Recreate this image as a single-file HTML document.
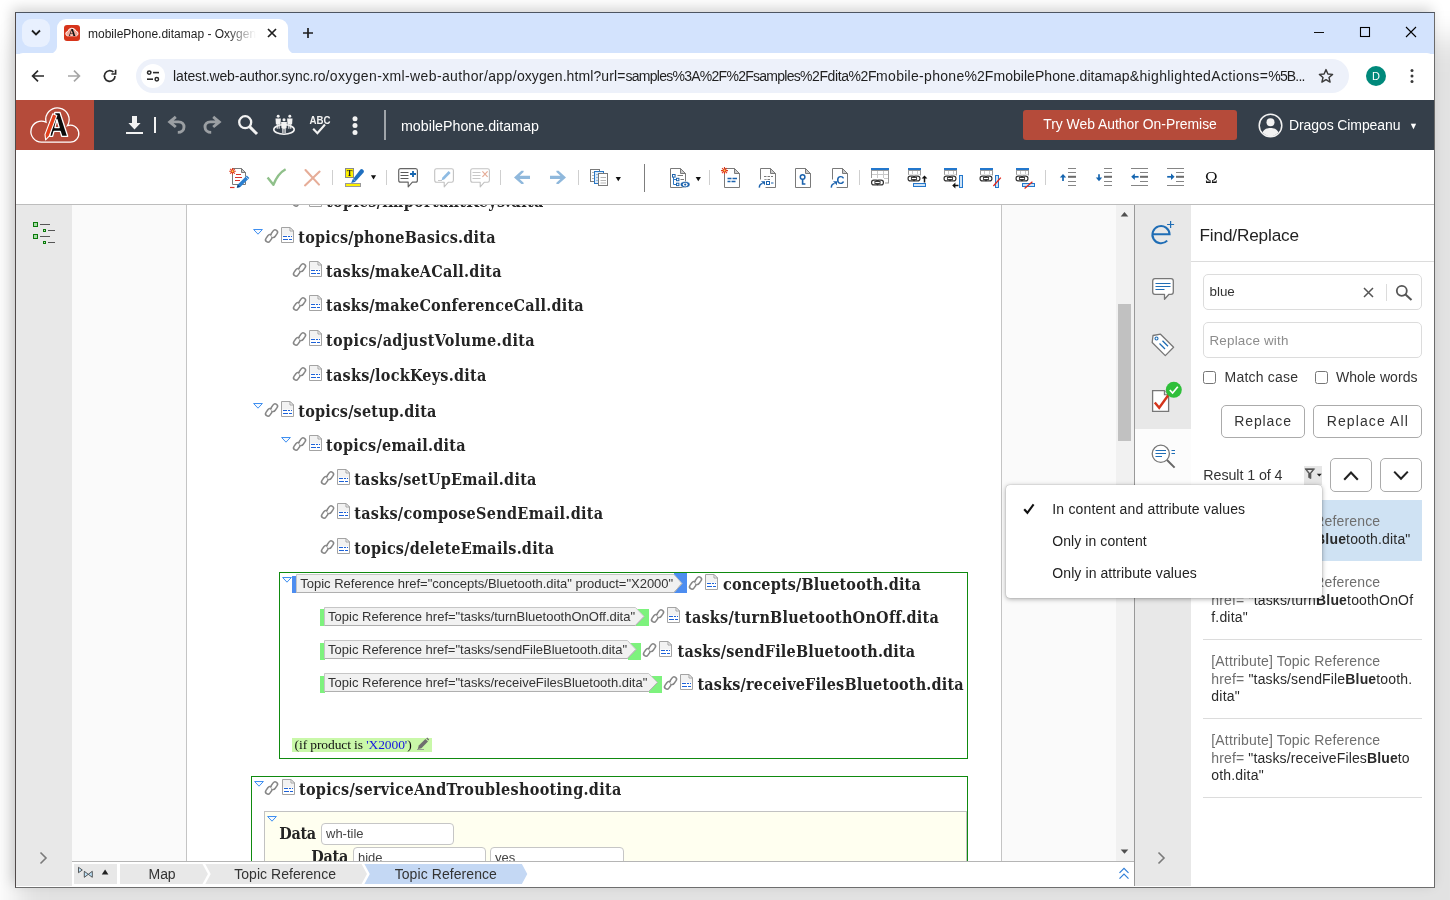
<!DOCTYPE html>
<html lang="en">
<head>
<meta charset="utf-8">
<title>mobilePhone.ditamap - Oxygen XML Web Author</title>
<style>
*{box-sizing:border-box;margin:0;padding:0}
html,body{width:1450px;height:900px;overflow:hidden;background:#fff}
body{position:relative;font-family:"Liberation Sans",sans-serif;color:#222}
.abs{position:absolute}
#shadow{position:absolute;left:15px;top:12px;width:1420px;height:876px;box-shadow:-3px -4px 12px rgba(0,0,0,.17),24px 50px 28px 24px rgba(0,0,0,.115);background:#fff}
#win{position:absolute;left:15px;top:12px;width:1420px;height:876px;border:1px solid #5a5a5a;border-color:#4d5561 #6a6a6a #6e6e6e #514a4a;background:#fff;overflow:hidden}
/* all children of #win are positioned in page coordinates via #pc */
#pc{position:absolute;left:-16px;top:-13px;width:1450px;height:900px;will-change:transform}
#tabstrip{left:16px;top:13px;width:1418px;height:41px;background:#d3e3fd}
#chtool{left:16px;top:53px;width:1418px;height:47px;background:#fff;border-radius:7px 7px 0 0}
#omni{left:136px;top:59px;width:1213px;height:34px;border-radius:17px;background:#edf1fa}
#apphead{left:16px;top:100px;width:1418px;height:50px;background:#353f4a}
#logo{left:16px;top:100px;width:78px;height:50px;background:#b54b3a}
#tbar{left:16px;top:150px;width:1418px;height:54px;background:#fff}
#tbarline{left:16px;top:204px;width:1418px;height:1px;background:#bdbdbd}
#lstrip{left:16px;top:205px;width:56px;height:681px;background:#e8e8e8}
#edbg{left:72px;top:205px;width:1044px;height:656px;background:#fafafa}
#page{left:186px;top:205px;width:816px;height:656px;background:#fff;border-left:1px solid #c4c4c4;border-right:1px solid #c4c4c4}
#sbar{left:1116px;top:205px;width:18px;height:656px;background:#f1f1f1}
#sthumb{left:1118px;top:304px;width:13px;height:137px;background:#c1c1c1}
#vline{left:1134px;top:205px;width:1px;height:681px;background:#999}
#rstrip{left:1135px;top:205px;width:56px;height:681px;background:#e8e8e8}
#panel{left:1191px;top:205px;width:243px;height:682px;background:#fff}
#bcbar{left:72px;top:861px;width:1062px;height:26px;background:#fff;border-top:1px solid #b5b5b5}

/* chrome */
#tsearch{left:22px;top:19px;width:28px;height:28px;border-radius:9px;background:#e8f0fe}
#tab{left:57px;top:19px;width:231px;height:35px;background:#fff;border-radius:9px 9px 0 0}
#tabfl1{left:49px;top:46px;width:8px;height:8px;background:radial-gradient(circle at 0 0,rgba(255,255,255,0) 7.5px,#fff 8.5px)}
#tabfl2{left:288px;top:46px;width:8px;height:8px;background:radial-gradient(circle at 100% 0,rgba(255,255,255,0) 7.5px,#fff 8.5px)}
#fav{left:64px;top:25px;width:16px;height:16px}
#tabtitle{left:88px;top:25px;width:170px;height:18px;font-size:12px;line-height:18px;color:#1f1f1f;white-space:nowrap;overflow:hidden;-webkit-mask-image:linear-gradient(90deg,#000 138px,transparent 168px);mask-image:linear-gradient(90deg,#000 138px,transparent 168px)}
#url{left:173px;top:66px;height:20px;line-height:20px;font-size:14px;color:#1f1f1f;white-space:nowrap}
#tune{left:141px;top:64px;width:24px;height:24px;border-radius:12px;background:#fff}
#prof{left:1366px;top:66px;width:20px;height:20px;border-radius:10px;background:#00897b;color:#fff;font-size:11px;line-height:20px;text-align:center}
svg{position:absolute;overflow:visible}

/* app header */
#doctitle{left:401px;top:116px;height:20px;line-height:20px;font-size:14.25px;color:#fff;white-space:nowrap}
#trybtn{left:1023px;top:110px;width:214px;height:30px;border-radius:3px;background:#b54b3a;color:#fff;font-size:13.9px;line-height:29px;text-align:center;white-space:nowrap}
#uname{left:1289px;top:115px;height:20px;line-height:20px;font-size:14px;letter-spacing:-.1px;color:#fff;white-space:nowrap}
#ucaret{left:1409px;top:120px;font-size:9px;color:#fff;line-height:12px}
/* editor */
#edclip{left:0;top:205px;width:1116px;height:656px;overflow:hidden}
#edclip>*{margin-top:-205px}
.t{font-family:"DejaVu Serif Condensed","DejaVu Serif","Liberation Serif",serif;font-weight:bold;font-size:16px;line-height:24px;height:24px;color:#242424;white-space:nowrap}
.gbox{border:1px solid #0f8a0f}
.tg{font-family:"Liberation Sans",sans-serif;font-size:13px;line-height:17px;height:17px;color:#333;white-space:nowrap}
.cond{font-family:"Liberation Serif",serif;font-size:13.5px;line-height:18px;height:18px;color:#111;white-space:nowrap}
.inp{background:#fff;border:1px solid #c6c6c6;border-radius:4px;font-size:13px;line-height:20px;padding-left:4px;color:#444;font-family:"Liberation Sans",sans-serif}
/* panel */
.ptx{font-family:"Liberation Sans",sans-serif;line-height:20px;height:20px;white-space:nowrap}
.pin{border:1px solid #dcdcdc;border-radius:5px;background:#fff}
.cb{width:13px;height:13px;border:1px solid #767676;border-radius:2.5px;background:#fff}
.pbtn{border:1px solid #ababab;border-radius:5px;background:#fff}
#popup{left:1005.5px;top:484.5px;width:316px;height:113px;background:#fff;border-radius:4px;box-shadow:0 1px 5px rgba(0,0,0,.35),0 0 1px rgba(0,0,0,.4)}
</style>
</head>
<body>
<div id="shadow"></div>
<div id="win"><div id="pc">

<div class="abs" id="tabstrip"></div>
<div class="abs" id="chtool"></div>
<div class="abs" id="omni"></div>

<!-- chrome -->
<div class="abs" id="tsearch"></div>
<svg style="left:30px;top:28.700px" width="12" height="8" viewBox="0 0 12 8"><path d="M2 1.5 L6 5.5 L10 1.5" fill="none" stroke="#1f1f1f" stroke-width="1.8"/></svg>
<div class="abs" id="tab"></div><div class="abs" id="tabfl1"></div><div class="abs" id="tabfl2"></div>
<svg id="fav" class="abs" viewBox="0 0 16 16"><rect width="16" height="16" rx="3" fill="#d7341a"/><path d="M3.2 10.8a2.3 2.3 0 0 1 .6-4.4a4.3 4.3 0 0 1 8.2-.3a2.5 2.5 0 0 1 .6 4.7z" fill="#f0a898" stroke="#fff" stroke-width=".9"/><text x="8" y="11.3" font-family="Liberation Serif,serif" font-weight="bold" font-size="10" text-anchor="middle" fill="#111">A</text></svg>
<div class="abs" id="tabtitle">mobilePhone.ditamap - Oxygen XML Web Author</div>
<svg style="left:267px;top:28px" width="10" height="10" viewBox="0 0 10 10"><path d="M1 1 L9 9 M9 1 L1 9" stroke="#1f1f1f" stroke-width="1.7"/></svg>
<svg style="left:302px;top:27px" width="12" height="12" viewBox="0 0 12 12"><path d="M6 1 V11 M1 6 H11" stroke="#1f1f1f" stroke-width="1.7"/></svg>
<div class="abs" style="left:1314px;top:32px;width:10px;height:1px;background:#111"></div>
<svg style="left:1360px;top:27px" width="10" height="10" viewBox="0 0 10 10"><rect x=".5" y=".5" width="9" height="9" fill="none" stroke="#000" stroke-width="1.1"/></svg>
<svg style="left:1406px;top:27px" width="10" height="10" viewBox="0 0 10 10"><path d="M0 0 L10 10 M10 0 L0 10" stroke="#000" stroke-width="1.1"/></svg>
<!-- nav -->
<svg style="left:31px;top:69px" width="14" height="14" viewBox="0 0 14 14"><path d="M13 7 H2 M7 1.6 L1.6 7 L7 12.4" fill="none" stroke="#2b2b2b" stroke-width="1.7"/></svg>
<svg style="left:67px;top:69px" width="14" height="14" viewBox="0 0 14 14"><path d="M1 7 H12 M7 1.6 L12.4 7 L7 12.4" fill="none" stroke="#a6a6a6" stroke-width="1.7"/></svg>
<svg style="left:103px;top:69px" width="14" height="14" viewBox="0 0 14 14"><path d="M12 7 A5.3 5.3 0 1 1 10.4 3.2" fill="none" stroke="#2b2b2b" stroke-width="1.7"/><path d="M12.6 .8 V5 H8.4" fill="none" stroke="#2b2b2b" stroke-width="1.7"/></svg>
<div class="abs" id="tune"></div>
<svg style="left:146px;top:70px" width="14" height="12" viewBox="0 0 14 12"><circle cx="3.2" cy="2.6" r="1.7" fill="none" stroke="#2b2b2b" stroke-width="1.5"/><path d="M7 2.6 H13" stroke="#2b2b2b" stroke-width="1.6"/><circle cx="10.8" cy="9.2" r="1.7" fill="none" stroke="#2b2b2b" stroke-width="1.5"/><path d="M1 9.2 H7" stroke="#2b2b2b" stroke-width="1.6"/></svg>
<div class="abs" id="url"><span style="position:absolute;left:0.0px;letter-spacing:-0.126px">latest.web-author.sync.ro</span><span style="position:absolute;left:152.5px;letter-spacing:0.374px">/oxygen-xml-web-author/app/</span><span style="position:absolute;left:343.9px;letter-spacing:0.099px">oxygen.html?url=</span><span style="position:absolute;left:452.5px;letter-spacing:-0.735px">samples%3A%2F%2Fsamples</span><span style="position:absolute;left:627.0px;letter-spacing:-0.406px">%2Fdita%2F</span><span style="position:absolute;left:703.1px;letter-spacing:0.296px">mobile-phone</span><span style="position:absolute;left:791.5px;letter-spacing:0.045px">%2FmobilePhone.ditamap</span><span style="position:absolute;left:956.7px;letter-spacing:0.372px">&amp;highlightedActions=</span><span style="position:absolute;left:1095.3px;letter-spacing:-0.842px">%5B...</span></div>
<svg style="left:1318px;top:68px" width="16" height="16" viewBox="0 0 16 16"><path d="M8 1.6 L9.9 6 L14.6 6.4 L11 9.5 L12.1 14.1 L8 11.6 L3.9 14.1 L5 9.5 L1.4 6.4 L6.1 6 Z" fill="none" stroke="#3a3a3a" stroke-width="1.4" stroke-linejoin="round"/></svg>
<div class="abs" id="prof">D</div>
<svg style="left:1410px;top:68px" width="4" height="16" viewBox="0 0 4 16"><circle cx="2" cy="2.6" r="1.5" fill="#3a3a3a"/><circle cx="2" cy="8" r="1.5" fill="#3a3a3a"/><circle cx="2" cy="13.4" r="1.5" fill="#3a3a3a"/></svg>
<div class="abs" id="apphead"></div>
<div class="abs" id="logo"></div>


<!-- app header content -->
<svg style="left:30px;top:107px" width="50" height="36" viewBox="0 0 50 36">
<path d="M11.4 35.1 A10.5 10.5 0 1 1 16 15.15 A11.7 11.7 0 1 1 37.44 18.6 A8.5 8.5 0 1 1 40.3 35.1 Z" fill="none" stroke="#fff" stroke-width="1.3"/>
<path d="M24.8 5.5 L30 5.5 L37.7 29.3 L31.7 29.3 L30.2 24.4 L24 24.4 L22.6 29.3 L19.6 29.3 Z M26.9 12.5 L24.9 20.6 L29.2 20.6 Z" fill="#0b0b0b" stroke="#fff" stroke-width="1.3" stroke-linejoin="round"/>
<path d="M22.800 6.800 L26.800 8.600 L19.200 29.200 L15.600 32.800 L15 27.400 Z" fill="#e2401c" stroke="#fff" stroke-width="1.100" stroke-linejoin="round"/>
</svg>
<svg style="left:126px;top:116px" width="17" height="18" viewBox="0 0 17 18"><path d="M6 0 H11 V7 H14.6 L8.5 13.6 L2.4 7 H6 Z" fill="#f2f2f2"/><rect x="0" y="16" width="17" height="2" fill="#f2f2f2"/></svg>
<div class="abs" style="left:154px;top:117px;width:2px;height:16px;background:#f2f2f2"></div>
<svg style="left:167px;top:116px" width="19" height="18" viewBox="0 0 19 18"><path d="M8.800 .8 L2.700 5.900 L8.800 11 M3 5.900 H11.500 C15.400 5.900 17 8.600 17 11 C17 14.200 14.400 16.400 10.800 16.400" fill="none" stroke="#9b9fa3" stroke-width="2.900" stroke-linejoin="miter"/></svg>
<svg style="left:203.400px;top:116px" width="19" height="18" viewBox="0 0 19 18"><path d="M10.200 .8 L16.300 5.900 L10.200 11 M16 5.900 H7.500 C3.600 5.900 2 8.600 2 11 C2 14.200 4.600 16.400 8.200 16.400" fill="none" stroke="#9b9fa3" stroke-width="2.900" stroke-linejoin="miter"/></svg>
<svg style="left:237px;top:114px" width="22" height="22" viewBox="0 0 22 22"><circle cx="8.2" cy="8.2" r="6" fill="none" stroke="#f2f2f2" stroke-width="2.3"/><path d="M12.6 12.6 L20 20" stroke="#f2f2f2" stroke-width="3"/></svg>
<svg style="left:273px;top:114px" width="23" height="22" viewBox="0 0 23 22">
<ellipse cx="11" cy="15.500" rx="10.200" ry="4.700" fill="none" stroke="#f2f2f2" stroke-width="1.600"/>
<g fill="#f2f2f2"><circle cx="5.200" cy="2.300" r="1.450"/><path d="M2.500 4.400 H7.900 L7.500 10.200 H6.700 V14.800 H5.600 V10.600 H4.800 V14.800 H3.700 V10.200 H2.900 Z"/>
<circle cx="16.800" cy="2.300" r="1.450"/><path d="M14.100 4.400 H19.500 L19.100 10.200 H18.300 V14.800 H17.200 V10.600 H16.400 V14.800 H15.300 V10.200 H14.500 Z"/>
<circle cx="11" cy="5.800" r="1.550"/><path d="M8.100 8 H13.900 L13.500 14.200 H12.700 V19.200 H11.450 V14.800 H10.550 V19.200 H9.300 V14.200 H8.500 Z"/></g></svg>
<svg style="left:308px;top:115px" width="24" height="20" viewBox="0 0 24 20"><text x="12" y="8.6" text-anchor="middle" font-family="Liberation Sans,sans-serif" font-weight="bold" font-size="10" fill="#f2f2f2" textLength="21" lengthAdjust="spacingAndGlyphs">ABC</text><path d="M5.200 13.800 L9.400 18.300 L17 9.500" fill="none" stroke="#f2f2f2" stroke-width="2.100"/></svg>
<svg style="left:352px;top:116px" width="6" height="20" viewBox="0 0 6 20"><circle cx="3" cy="2.7" r="2.5" fill="#f2f2f2"/><circle cx="3" cy="9.6" r="2.5" fill="#f2f2f2"/><circle cx="3" cy="16.5" r="2.5" fill="#f2f2f2"/></svg>
<div class="abs" style="left:384px;top:110px;width:2px;height:30px;background:#9fa4a9"></div>
<div class="abs" id="doctitle">mobilePhone.ditamap</div>
<div class="abs" id="trybtn"><span>Try Web Author On-Premise</span></div>
<svg style="left:1258px;top:113px" width="25" height="25" viewBox="0 0 25 25"><circle cx="12.5" cy="12.5" r="11.3" fill="none" stroke="#f2f2f2" stroke-width="1.5"/><circle cx="12.5" cy="9.3" r="4" fill="#f2f2f2"/><path d="M4.6 19.6 C6 15.8 9.5 15 12.5 15 C15.5 15 19 15.8 20.4 19.6 A10.4 10.4 0 0 1 4.6 19.6 Z" fill="#f2f2f2"/></svg>
<div class="abs" id="uname">Dragos Cimpeanu</div>
<div class="abs" id="ucaret">&#9660;</div>

<div class="abs" id="tbar"></div>
<div class="abs" id="tbarline"></div>
<div class="abs" id="lstrip"></div>
<div class="abs" id="edbg"></div>
<div class="abs" id="page"></div>
<div class="abs" id="sbar"></div>
<div class="abs" id="sthumb"></div>
<div class="abs" id="vline"></div>
<div class="abs" id="rstrip"></div>
<div class="abs" id="panel"></div>
<div class="abs" id="bcbar"></div>

<!-- toolbar -->
<svg style="left:16px;top:150px" width="1418" height="54" viewBox="16 150 1418 54">
<path d="M232.5 168.5 H241.5 L245.5 172.5 V184.5 H232.5 Z" fill="#fff" stroke="#7a7a7a" stroke-width="1"/><path d="M241.5 168.5 V172.5 H245.5 Z" fill="#c9c9c9" stroke="#7a7a7a" stroke-width="1" stroke-linejoin="round"/>
<path d="M236 174.5 H241 M235 177.5 H242 M235 180.5 H240" stroke="#d9342a" stroke-width="1.1"/>
<path d="M229.20 171.20 L235.80 171.20 M230.17 168.87 L234.83 173.53 M232.50 167.90 L232.50 174.50 M234.83 168.87 L230.17 173.53 " stroke="#e03a1c" stroke-width="1.1"/><circle cx="232.5" cy="171.2" r="1" fill="#ffd24a"/>
<path d="M230 187.5 H234.5" stroke="#d9342a" stroke-width="1.2"/>
<path d="M236.800 187.800 L237.800 184.400 L246.800 175.400 L249.300 177.900 L240.300 186.900 Z" fill="#2a7fd0"/><path d="M236.800 187.800 L237.800 184.400 L240.300 186.900 Z" fill="#15467d"/><path d="M245.600 176.600 L248.100 179.100" stroke="#fff" stroke-width=".6"/>
<path d="M267.6 177.6 L273.4 184.8 C276 178 280.5 172 285.6 169.2" fill="none" stroke="#8fc08a" stroke-width="2.4" stroke-linejoin="round"/>
<path d="M305.5 170 L319 184.6 M319.6 171.6 L305 185.4" stroke="#e6ad98" stroke-width="2.1" stroke-linecap="round"/>
<rect x="332" y="170" width="1" height="15" fill="#cfcfcf"/>
<rect x="345.5" y="168.5" width="8" height="9" fill="#fff200" stroke="#8a8a8a"/>
<text x="349.5" y="176.3" text-anchor="middle" font-family="Liberation Serif,serif" font-weight="bold" font-size="8.5" fill="#222">T</text>
<path d="M351.2 183 L352.6 179.6 L360.4 169.6 Q361.6 168.6 362.8 169.6 L363.6 170.4 Q364.4 171.6 363.4 172.8 L355 182 Z" fill="#1f6fc0"/><path d="M353.4 179.2 L355.8 181.4" stroke="#9cc4ea" stroke-width=".8"/>
<rect x="345.5" y="183.5" width="15" height="3" fill="#fff200" stroke="#9a9a9a"/>
<path d="M370.9 175.2 H376.1 L373.5 179.39999999999998 Z" fill="#111"/>
<rect x="386" y="170" width="1" height="15" fill="#cfcfcf"/>
<path d="M400.6 168.7 H415.6 Q417.4 168.7 417.4 170.6 V180.2 Q417.4 182.2 415.6 182.2 H412.4 L408.2 186.8 V182.2 H400.6 Q398.7 182.2 398.7 180.2 V170.6 Q398.7 168.7 400.6 168.7 Z" fill="#fff" stroke="#666" stroke-width="1.2" stroke-linejoin="round"/>
<path d="M400.5 172.5 H408.5 M400.5 175.5 H408.5 M400.5 178.5 H408.5" stroke="#5a5a5a" stroke-width="1"/>
<path d="M413 171 V177 M410 174 H416" stroke="#1565b0" stroke-width="1.8"/>
<path d="M436.6 168.7 H451.6 Q453.4 168.7 453.4 170.6 V180.2 Q453.4 182.2 451.6 182.2 H448.4 L444.2 186.8 V182.2 H436.6 Q434.7 182.2 434.7 180.2 V170.6 Q434.7 168.7 436.6 168.7 Z" fill="#fff" stroke="#c2c2c2" stroke-width="1.1" stroke-linejoin="round"/>
<path d="M438 180.5 H442" stroke="#c8c8c8" stroke-width="1"/><path d="M441.6 180.2 L442.4 177.6 L448.6 171 L450.6 173 L444.2 179.4 Z" fill="#8ebbe3"/>
<path d="M472.6 168.7 H487.6 Q489.4 168.7 489.4 170.6 V180.2 Q489.4 182.2 487.6 182.2 H484.4 L480.2 186.8 V182.2 H472.6 Q470.7 182.2 470.7 180.2 V170.6 Q470.7 168.7 472.6 168.7 Z" fill="#fff" stroke="#c2c2c2" stroke-width="1.1" stroke-linejoin="round"/>
<path d="M472.5 172.5 H480.5 M472.5 175.5 H480.5 M472.5 178.5 H480.5" stroke="#c8c8c8" stroke-width="1"/>
<path d="M482.4 171.4 L487.6 176.8 M487.6 171.4 L482.4 176.8" stroke="#e6ad98" stroke-width="1.2"/>
<rect x="500" y="170" width="1" height="15" fill="#cfcfcf"/>
<path d="M514 177.4 L521.4 170.8 L523.6 170.8 L523.6 172 L519.6 175.8 H530 V179 H519.6 L523.6 182.8 V184 H521.4 Z" fill="#8fb8dc"/>
<path d="M566 177.4 L558.6 170.8 L556.4 170.8 L556.4 172 L560.4 175.8 H550 V179 H560.4 L556.4 182.8 V184 H558.6 Z" fill="#8fb8dc"/>
<rect x="578" y="170" width="1" height="15" fill="#cfcfcf"/>
<rect x="590.5" y="169.5" width="9" height="12" fill="#fff" stroke="#7a7a7a"/><path d="M592 172.5 H598 M592 175.5 H598 M592 178.5 H598" stroke="#b5b5b5"/>
<rect x="594.5" y="171.500" width="9" height="12" fill="#dcebf9" stroke="#2a78c6"/><path d="M596 174.5 H602 M596 177.5 H602 M596 180.5 H602" stroke="#8db9e4"/>
<rect x="598.5" y="173.5" width="9" height="12" fill="#fff" stroke="#7a7a7a"/><path d="M600.5 177.5 H606 M600.5 180.5 H606 M600.5 183 H606" stroke="#b5b5b5"/>
<path d="M615.6999999999999 177 H620.9 L618.3 181.2 Z" fill="#111"/>
<rect x="644" y="164" width="1" height="28" fill="#7d7d7d"/>
<path d="M670.5 168.5 H680.5 L685.5 173.5 V187.5 H670.5 Z" fill="#fff" stroke="#7a7a7a" stroke-width="1"/><path d="M680.5 168.5 V173.5 H685.5 Z" fill="#c9c9c9" stroke="#7a7a7a" stroke-width="1" stroke-linejoin="round"/>
<path d="M673.500 176 V184.500 H677 M673.500 179.500 H677" fill="none" stroke="#2a78c6" stroke-width="1"/>
<rect x="672.5" y="174.500" width="2.600" height="2.600" fill="#fff" stroke="#1b62ad"/><rect x="676.5" y="178.300" width="2.400" height="2.400" fill="#fff" stroke="#1b62ad"/><rect x="676.5" y="183.200" width="2.400" height="2.400" fill="#fff" stroke="#1b62ad"/>
<path d="M677.5 175.5 H683 M680.5 179.5 H684" stroke="#7a7a7a"/>
<ellipse cx="685.2" cy="184.600" rx="4.800" ry="3" fill="#1b62ad" stroke="#fff" stroke-width=".6"/><ellipse cx="685.2" cy="184.600" rx="2.500" ry="1.900" fill="#fff"/><circle cx="685.2" cy="184.600" r="1.100" fill="#1b62ad"/>
<path d="M695.6999999999999 177 H700.9 L698.3 181.2 Z" fill="#111"/>
<rect x="709" y="170" width="1" height="15" fill="#cfcfcf"/>
<path d="M724.5 168.5 H734.5 L739.5 173.5 V187.5 H724.5 Z" fill="#fff" stroke="#7a7a7a" stroke-width="1"/><path d="M734.5 168.5 V173.5 H739.5 Z" fill="#c9c9c9" stroke="#7a7a7a" stroke-width="1" stroke-linejoin="round"/>
<path d="M727.5 178.500 H731.500 M732.500 178.500 H737 M727.5 181.500 H730.500 M731.500 181.500 H735.500" stroke="#1b62ad" stroke-width="1.300"/>
<path d="M721.00 170.60 L728.00 170.60 M722.03 168.13 L726.97 173.07 M724.50 167.10 L724.50 174.10 M726.97 168.13 L722.03 173.07 " stroke="#e03a1c" stroke-width="1.1"/><circle cx="724.5" cy="170.6" r="1" fill="#ffd24a"/>
<path d="M760.5 168.5 H770.5 L775.5 173.5 V187.5 H760.5 Z" fill="#fff" stroke="#7a7a7a" stroke-width="1"/><path d="M770.5 168.5 V173.5 H775.5 Z" fill="#c9c9c9" stroke="#7a7a7a" stroke-width="1" stroke-linejoin="round"/>
<path d="M764 176.500 H766.500 M767.500 176.500 H770 M771 176.500 H773 M764 179.500 H766.500 M767.500 179.500 H770" stroke="#7a7a7a" stroke-width="1"/><rect x="766.5" y="181.500" width="3" height="3" fill="#fff" stroke="#1b62ad"/><path d="M771 183 H773.500" stroke="#1b62ad"/>
<rect x="757" y="179.500" width="8.500" height="9" fill="#fff"/>
<path d="M759.4 187.6 C759.2 185.2 760.6 184.0 762.6 183.39999999999998" fill="none" stroke="#1b62ad" stroke-width="1.5"/><path d="M761 181.2 H765 V185.2 Z" fill="#1b62ad"/>
<path d="M795.5 168.5 H805.5 L810.5 173.5 V187.5 H795.5 Z" fill="#fff" stroke="#7a7a7a" stroke-width="1"/><path d="M805.5 168.5 V173.5 H810.5 Z" fill="#c9c9c9" stroke="#7a7a7a" stroke-width="1" stroke-linejoin="round"/>
<circle cx="802.6" cy="177" r="2.300" fill="none" stroke="#1b62ad" stroke-width="1.500"/><path d="M802.6 179 V184 H805.400" fill="none" stroke="#1b62ad" stroke-width="1.600"/>
<path d="M832.5 168.5 H842.5 L847.5 173.5 V187.5 H832.5 Z" fill="#fff" stroke="#7a7a7a" stroke-width="1"/><path d="M842.5 168.5 V173.5 H847.5 Z" fill="#c9c9c9" stroke="#7a7a7a" stroke-width="1" stroke-linejoin="round"/>
<text x="840.6" y="184" text-anchor="middle" font-family="Liberation Sans,sans-serif" font-weight="bold" font-size="11" fill="#1b62ad">C</text>
<rect x="829" y="179.500" width="7.600" height="9" fill="#fff"/>
<path d="M831.4 187.6 C831.2 185.2 832.6 184.0 834.6 183.39999999999998" fill="none" stroke="#1b62ad" stroke-width="1.5"/><path d="M833 181.2 H837 V185.2 Z" fill="#1b62ad"/>
<rect x="859" y="170" width="1" height="15" fill="#cfcfcf"/>
<rect x="871" y="168" width="18" height="3" fill="#2377cc"/><rect x="871.5" y="170.5" width="17" height="12.5" fill="#fff" stroke="#9a9a9a"/><path d="M877.5 171 V183" stroke="#c9c9c9"/><path d="M883.5 171 V183" stroke="#c9c9c9"/><path d="M872 174.5 H888" stroke="#c9c9c9"/><path d="M872 178.5 H888" stroke="#c9c9c9"/>
<rect x="870" y="178" width="14" height="9" fill="#fff"/>
<rect x="870" y="178.5" width="15" height="8" rx="3.500" fill="#fff"/><rect x="871.6" y="180.1" width="6.8" height="4.8" rx="2.2" fill="none" stroke="#333" stroke-width="1.200"/><rect x="876.6" y="180.1" width="6.8" height="4.8" rx="2.2" fill="none" stroke="#333" stroke-width="1.200"/><rect x="874.9" y="181.5" width="5.2" height="2" fill="#fff" stroke="#333" stroke-width=".9"/>
<rect x="908" y="168" width="13" height="3" fill="#2377cc"/><rect x="908.5" y="170.5" width="12" height="9.5" fill="#fff" stroke="#9a9a9a"/><path d="M912.5 171 V180" stroke="#c9c9c9"/><path d="M917.5 171 V180" stroke="#c9c9c9"/><path d="M909 174.5 H920" stroke="#c9c9c9"/>
<rect x="906.5" y="174.5" width="15" height="8" rx="3.500" fill="#fff"/><rect x="908.1" y="176.1" width="6.8" height="4.8" rx="2.2" fill="none" stroke="#333" stroke-width="1.200"/><rect x="913.1" y="176.1" width="6.8" height="4.8" rx="2.2" fill="none" stroke="#333" stroke-width="1.200"/><rect x="911.4" y="177.5" width="5.2" height="2" fill="#fff" stroke="#333" stroke-width=".9"/>
<path d="M924.5 182.500 V177" stroke="#111" stroke-width="1.500"/><path d="M921.600 178.600 L924.5 175.400 L927.400 178.600 Z" fill="#111"/>
<rect x="913.5" y="183.500" width="12" height="3" fill="#cfe3f6" stroke="#2377cc"/>
<rect x="944" y="168" width="13" height="3" fill="#2377cc"/><rect x="944.5" y="170.5" width="12" height="9.5" fill="#fff" stroke="#9a9a9a"/><path d="M948.5 171 V180" stroke="#c9c9c9"/><path d="M953.5 171 V180" stroke="#c9c9c9"/><path d="M945 174.5 H956" stroke="#c9c9c9"/>
<rect x="942.5" y="174.5" width="15" height="8" rx="3.500" fill="#fff"/><rect x="944.1" y="176.1" width="6.8" height="4.8" rx="2.2" fill="none" stroke="#333" stroke-width="1.200"/><rect x="949.1" y="176.1" width="6.8" height="4.8" rx="2.2" fill="none" stroke="#333" stroke-width="1.200"/><rect x="947.4" y="177.5" width="5.2" height="2" fill="#fff" stroke="#333" stroke-width=".9"/>
<path d="M958.500 185.500 H954" stroke="#111" stroke-width="1.500"/><path d="M955.400 182.600 L952.200 185.500 L955.400 188.400 Z" fill="#111"/>
<rect x="959.5" y="175.500" width="3" height="12" fill="#cfe3f6" stroke="#2377cc"/>
<rect x="980" y="168" width="13" height="3" fill="#2377cc"/><rect x="980.5" y="170.5" width="12" height="9.5" fill="#fff" stroke="#9a9a9a"/><path d="M984.5 171 V180" stroke="#c9c9c9"/><path d="M989.5 171 V180" stroke="#c9c9c9"/><path d="M981 174.5 H992" stroke="#c9c9c9"/>
<rect x="978.5" y="174.5" width="15" height="8" rx="3.500" fill="#fff"/><rect x="980.1" y="176.1" width="6.8" height="4.8" rx="2.2" fill="none" stroke="#333" stroke-width="1.200"/><rect x="985.1" y="176.1" width="6.8" height="4.8" rx="2.2" fill="none" stroke="#333" stroke-width="1.200"/><rect x="983.4" y="177.5" width="5.2" height="2" fill="#fff" stroke="#333" stroke-width=".9"/>
<rect x="995.5" y="175.500" width="3" height="12" fill="#cfe3f6" stroke="#2377cc"/><path d="M993.400 186 L1000.800 177.600" stroke="#e2281c" stroke-width="1.300"/>
<rect x="1016" y="168" width="13" height="3" fill="#2377cc"/><rect x="1016.5" y="170.5" width="12" height="9.5" fill="#fff" stroke="#9a9a9a"/><path d="M1020.5 171 V180" stroke="#c9c9c9"/><path d="M1025.5 171 V180" stroke="#c9c9c9"/><path d="M1017 174.5 H1028" stroke="#c9c9c9"/>
<rect x="1014.5" y="174.5" width="15" height="8" rx="3.500" fill="#fff"/><rect x="1016.1" y="176.1" width="6.8" height="4.8" rx="2.2" fill="none" stroke="#333" stroke-width="1.200"/><rect x="1021.1" y="176.1" width="6.8" height="4.8" rx="2.2" fill="none" stroke="#333" stroke-width="1.200"/><rect x="1019.4" y="177.5" width="5.2" height="2" fill="#fff" stroke="#333" stroke-width=".9"/>
<rect x="1022.5" y="183.500" width="12" height="3" fill="#cfe3f6" stroke="#2377cc"/><path d="M1024.600 188.400 L1032.400 181.800" stroke="#e2281c" stroke-width="1.300"/>
<rect x="1045" y="170" width="1" height="15" fill="#cfcfcf"/>
<rect x="1068" y="168.0" width="8" height="1" fill="#858585"/><rect x="1068" y="172.0" width="8" height="1" fill="#858585"/><rect x="1068" y="175.800" width="8" height="2" fill="#6b6b6b"/><rect x="1068" y="181.0" width="8" height="1" fill="#858585"/><rect x="1068" y="185.0" width="8" height="1" fill="#858585"/>
<path d="M1063 181 V176" stroke="#1565b0" stroke-width="1.700"/><path d="M1059.800 177.600 L1063 174 L1066.200 177.600 Z" fill="#1565b0"/>
<rect x="1104" y="168.0" width="8" height="1" fill="#858585"/><rect x="1104" y="172.0" width="8" height="1" fill="#858585"/><rect x="1104" y="175.800" width="8" height="2" fill="#6b6b6b"/><rect x="1104" y="181.0" width="8" height="1" fill="#858585"/><rect x="1104" y="185.0" width="8" height="1" fill="#858585"/>
<path d="M1099 174.200 V179.200" stroke="#1565b0" stroke-width="1.700"/><path d="M1095.800 177.600 L1099 181.200 L1102.200 177.600 Z" fill="#1565b0"/>
<rect x="1131" y="168.0" width="17" height="1" fill="#858585"/><rect x="1140" y="172.0" width="8" height="1" fill="#858585"/><rect x="1140" y="175.800" width="8" height="2" fill="#6b6b6b"/><rect x="1140" y="181.0" width="8" height="1" fill="#858585"/><rect x="1131" y="185.0" width="17" height="1" fill="#858585"/>
<path d="M1138.600 176.800 H1133.600" stroke="#1565b0" stroke-width="1.700"/><path d="M1134.800 173.600 L1131.200 176.800 L1134.800 180 Z" fill="#1565b0"/>
<rect x="1167" y="168.0" width="17" height="1" fill="#858585"/><rect x="1176" y="172.0" width="8" height="1" fill="#858585"/><rect x="1176" y="175.800" width="8" height="2" fill="#6b6b6b"/><rect x="1176" y="181.0" width="8" height="1" fill="#858585"/><rect x="1167" y="185.0" width="17" height="1" fill="#858585"/>
<path d="M1167.200 176.800 H1172.200" stroke="#1565b0" stroke-width="1.700"/><path d="M1171 173.600 L1174.600 176.800 L1171 180 Z" fill="#1565b0"/>
<text x="1211.3" y="183" text-anchor="middle" font-family="Liberation Serif,serif" font-size="17" fill="#111">&#937;</text>
</svg>

<!-- editor content -->
<div class="abs" id="edclip">
<svg style="left:291.5px;top:191.7px" width="15" height="16" viewBox="0 0 15 16"><g fill="none" stroke="#868686" stroke-width="1.500"><rect x="-4" y="-2.400" width="8" height="4.800" rx="2.400" transform="translate(10.2 5.6) rotate(-55)"/><path d="M6.300 7.300 L7.400 8.900" stroke="#fff" stroke-width="1.600"/><rect x="-4" y="-2.400" width="8" height="4.800" rx="2.400" transform="translate(4.9 10.4) rotate(-55)"/><path d="M8.800 8.700 L7.700 7.100" stroke="#fff" stroke-width="1.600" transform="translate(0 0)"/></g></svg><svg style="left:308.90000000000003px;top:191px" width="13" height="16" viewBox="0 0 13 16"><path d="M.5 .5 H9 L12.500 4 V15.500 H.5 Z" fill="#fff" stroke="#a3a3a3"/><path d="M1 1 H9 L12 4 V8 H1 Z" fill="#f2f2f2"/><path d="M1 8 H12 V10 H1 Z" fill="#f9f9f9"/><path d="M9 .5 V4 H12.500 Z" fill="#fff" stroke="#a3a3a3" stroke-linejoin="round"/><path d="M2 9.500 H6 M7 9.500 H9 M10 9.500 H11 M2 12.500 H7 M8 12.500 H11" stroke="#1d62d8" stroke-width="1.200"/></svg><div class="abs t" style="left:326.1px;top:189.5px;letter-spacing:0.329px;">topics/importantKeys.dita</div>
<svg style="left:252.9px;top:229px" width="10" height="6" viewBox="0 0 10 6"><path d="M.6 .5 H9.4 L5 5.2 Z" fill="#f4f9ff" stroke="#3f8ff0" stroke-width="1" stroke-linejoin="round"/></svg><svg style="left:263.7px;top:227.7px" width="15" height="16" viewBox="0 0 15 16"><g fill="none" stroke="#868686" stroke-width="1.500"><rect x="-4" y="-2.400" width="8" height="4.800" rx="2.400" transform="translate(10.2 5.6) rotate(-55)"/><path d="M6.300 7.300 L7.400 8.900" stroke="#fff" stroke-width="1.600"/><rect x="-4" y="-2.400" width="8" height="4.800" rx="2.400" transform="translate(4.9 10.4) rotate(-55)"/><path d="M8.800 8.700 L7.700 7.100" stroke="#fff" stroke-width="1.600" transform="translate(0 0)"/></g></svg><svg style="left:281.1px;top:227px" width="13" height="16" viewBox="0 0 13 16"><path d="M.5 .5 H9 L12.500 4 V15.500 H.5 Z" fill="#fff" stroke="#a3a3a3"/><path d="M1 1 H9 L12 4 V8 H1 Z" fill="#f2f2f2"/><path d="M1 8 H12 V10 H1 Z" fill="#f9f9f9"/><path d="M9 .5 V4 H12.500 Z" fill="#fff" stroke="#a3a3a3" stroke-linejoin="round"/><path d="M2 9.500 H6 M7 9.500 H9 M10 9.500 H11 M2 12.500 H7 M8 12.500 H11" stroke="#1d62d8" stroke-width="1.200"/></svg><div class="abs t" style="left:298.3px;top:225.5px;letter-spacing:0.230px;">topics/phoneBasics.dita</div>
<svg style="left:291.5px;top:261.7px" width="15" height="16" viewBox="0 0 15 16"><g fill="none" stroke="#868686" stroke-width="1.500"><rect x="-4" y="-2.400" width="8" height="4.800" rx="2.400" transform="translate(10.2 5.6) rotate(-55)"/><path d="M6.300 7.300 L7.400 8.900" stroke="#fff" stroke-width="1.600"/><rect x="-4" y="-2.400" width="8" height="4.800" rx="2.400" transform="translate(4.9 10.4) rotate(-55)"/><path d="M8.800 8.700 L7.700 7.100" stroke="#fff" stroke-width="1.600" transform="translate(0 0)"/></g></svg><svg style="left:308.90000000000003px;top:261px" width="13" height="16" viewBox="0 0 13 16"><path d="M.5 .5 H9 L12.500 4 V15.500 H.5 Z" fill="#fff" stroke="#a3a3a3"/><path d="M1 1 H9 L12 4 V8 H1 Z" fill="#f2f2f2"/><path d="M1 8 H12 V10 H1 Z" fill="#f9f9f9"/><path d="M9 .5 V4 H12.500 Z" fill="#fff" stroke="#a3a3a3" stroke-linejoin="round"/><path d="M2 9.500 H6 M7 9.500 H9 M10 9.500 H11 M2 12.500 H7 M8 12.500 H11" stroke="#1d62d8" stroke-width="1.200"/></svg><div class="abs t" style="left:326.1px;top:259.5px;letter-spacing:0.263px;">tasks/makeACall.dita</div>
<svg style="left:291.5px;top:295.7px" width="15" height="16" viewBox="0 0 15 16"><g fill="none" stroke="#868686" stroke-width="1.500"><rect x="-4" y="-2.400" width="8" height="4.800" rx="2.400" transform="translate(10.2 5.6) rotate(-55)"/><path d="M6.300 7.300 L7.400 8.900" stroke="#fff" stroke-width="1.600"/><rect x="-4" y="-2.400" width="8" height="4.800" rx="2.400" transform="translate(4.9 10.4) rotate(-55)"/><path d="M8.800 8.700 L7.700 7.100" stroke="#fff" stroke-width="1.600" transform="translate(0 0)"/></g></svg><svg style="left:308.90000000000003px;top:295px" width="13" height="16" viewBox="0 0 13 16"><path d="M.5 .5 H9 L12.500 4 V15.500 H.5 Z" fill="#fff" stroke="#a3a3a3"/><path d="M1 1 H9 L12 4 V8 H1 Z" fill="#f2f2f2"/><path d="M1 8 H12 V10 H1 Z" fill="#f9f9f9"/><path d="M9 .5 V4 H12.500 Z" fill="#fff" stroke="#a3a3a3" stroke-linejoin="round"/><path d="M2 9.500 H6 M7 9.500 H9 M10 9.500 H11 M2 12.500 H7 M8 12.500 H11" stroke="#1d62d8" stroke-width="1.200"/></svg><div class="abs t" style="left:326.1px;top:293.5px;letter-spacing:0.219px;">tasks/makeConferenceCall.dita</div>
<svg style="left:291.5px;top:330.7px" width="15" height="16" viewBox="0 0 15 16"><g fill="none" stroke="#868686" stroke-width="1.500"><rect x="-4" y="-2.400" width="8" height="4.800" rx="2.400" transform="translate(10.2 5.6) rotate(-55)"/><path d="M6.300 7.300 L7.400 8.900" stroke="#fff" stroke-width="1.600"/><rect x="-4" y="-2.400" width="8" height="4.800" rx="2.400" transform="translate(4.9 10.4) rotate(-55)"/><path d="M8.800 8.700 L7.700 7.100" stroke="#fff" stroke-width="1.600" transform="translate(0 0)"/></g></svg><svg style="left:308.90000000000003px;top:330px" width="13" height="16" viewBox="0 0 13 16"><path d="M.5 .5 H9 L12.500 4 V15.500 H.5 Z" fill="#fff" stroke="#a3a3a3"/><path d="M1 1 H9 L12 4 V8 H1 Z" fill="#f2f2f2"/><path d="M1 8 H12 V10 H1 Z" fill="#f9f9f9"/><path d="M9 .5 V4 H12.500 Z" fill="#fff" stroke="#a3a3a3" stroke-linejoin="round"/><path d="M2 9.500 H6 M7 9.500 H9 M10 9.500 H11 M2 12.500 H7 M8 12.500 H11" stroke="#1d62d8" stroke-width="1.200"/></svg><div class="abs t" style="left:326.1px;top:328.5px;letter-spacing:0.376px;">topics/adjustVolume.dita</div>
<svg style="left:291.5px;top:365.7px" width="15" height="16" viewBox="0 0 15 16"><g fill="none" stroke="#868686" stroke-width="1.500"><rect x="-4" y="-2.400" width="8" height="4.800" rx="2.400" transform="translate(10.2 5.6) rotate(-55)"/><path d="M6.300 7.300 L7.400 8.900" stroke="#fff" stroke-width="1.600"/><rect x="-4" y="-2.400" width="8" height="4.800" rx="2.400" transform="translate(4.9 10.4) rotate(-55)"/><path d="M8.800 8.700 L7.700 7.100" stroke="#fff" stroke-width="1.600" transform="translate(0 0)"/></g></svg><svg style="left:308.90000000000003px;top:365px" width="13" height="16" viewBox="0 0 13 16"><path d="M.5 .5 H9 L12.500 4 V15.500 H.5 Z" fill="#fff" stroke="#a3a3a3"/><path d="M1 1 H9 L12 4 V8 H1 Z" fill="#f2f2f2"/><path d="M1 8 H12 V10 H1 Z" fill="#f9f9f9"/><path d="M9 .5 V4 H12.500 Z" fill="#fff" stroke="#a3a3a3" stroke-linejoin="round"/><path d="M2 9.500 H6 M7 9.500 H9 M10 9.500 H11 M2 12.500 H7 M8 12.500 H11" stroke="#1d62d8" stroke-width="1.200"/></svg><div class="abs t" style="left:326.1px;top:363.5px;letter-spacing:0.256px;">tasks/lockKeys.dita</div>
<svg style="left:252.9px;top:403px" width="10" height="6" viewBox="0 0 10 6"><path d="M.6 .5 H9.4 L5 5.2 Z" fill="#f4f9ff" stroke="#3f8ff0" stroke-width="1" stroke-linejoin="round"/></svg><svg style="left:263.7px;top:401.7px" width="15" height="16" viewBox="0 0 15 16"><g fill="none" stroke="#868686" stroke-width="1.500"><rect x="-4" y="-2.400" width="8" height="4.800" rx="2.400" transform="translate(10.2 5.6) rotate(-55)"/><path d="M6.300 7.300 L7.400 8.900" stroke="#fff" stroke-width="1.600"/><rect x="-4" y="-2.400" width="8" height="4.800" rx="2.400" transform="translate(4.9 10.4) rotate(-55)"/><path d="M8.800 8.700 L7.700 7.100" stroke="#fff" stroke-width="1.600" transform="translate(0 0)"/></g></svg><svg style="left:281.1px;top:401px" width="13" height="16" viewBox="0 0 13 16"><path d="M.5 .5 H9 L12.500 4 V15.500 H.5 Z" fill="#fff" stroke="#a3a3a3"/><path d="M1 1 H9 L12 4 V8 H1 Z" fill="#f2f2f2"/><path d="M1 8 H12 V10 H1 Z" fill="#f9f9f9"/><path d="M9 .5 V4 H12.500 Z" fill="#fff" stroke="#a3a3a3" stroke-linejoin="round"/><path d="M2 9.500 H6 M7 9.500 H9 M10 9.500 H11 M2 12.500 H7 M8 12.500 H11" stroke="#1d62d8" stroke-width="1.200"/></svg><div class="abs t" style="left:298.3px;top:399.5px;letter-spacing:0.202px;">topics/setup.dita</div>
<svg style="left:280.70000000000005px;top:437px" width="10" height="6" viewBox="0 0 10 6"><path d="M.6 .5 H9.4 L5 5.2 Z" fill="#f4f9ff" stroke="#3f8ff0" stroke-width="1" stroke-linejoin="round"/></svg><svg style="left:291.5px;top:435.7px" width="15" height="16" viewBox="0 0 15 16"><g fill="none" stroke="#868686" stroke-width="1.500"><rect x="-4" y="-2.400" width="8" height="4.800" rx="2.400" transform="translate(10.2 5.6) rotate(-55)"/><path d="M6.300 7.300 L7.400 8.900" stroke="#fff" stroke-width="1.600"/><rect x="-4" y="-2.400" width="8" height="4.800" rx="2.400" transform="translate(4.9 10.4) rotate(-55)"/><path d="M8.800 8.700 L7.700 7.100" stroke="#fff" stroke-width="1.600" transform="translate(0 0)"/></g></svg><svg style="left:308.90000000000003px;top:435px" width="13" height="16" viewBox="0 0 13 16"><path d="M.5 .5 H9 L12.500 4 V15.500 H.5 Z" fill="#fff" stroke="#a3a3a3"/><path d="M1 1 H9 L12 4 V8 H1 Z" fill="#f2f2f2"/><path d="M1 8 H12 V10 H1 Z" fill="#f9f9f9"/><path d="M9 .5 V4 H12.500 Z" fill="#fff" stroke="#a3a3a3" stroke-linejoin="round"/><path d="M2 9.500 H6 M7 9.500 H9 M10 9.500 H11 M2 12.500 H7 M8 12.500 H11" stroke="#1d62d8" stroke-width="1.200"/></svg><div class="abs t" style="left:326.1px;top:433.5px;letter-spacing:0.278px;">topics/email.dita</div>
<svg style="left:319.59999999999997px;top:469.7px" width="15" height="16" viewBox="0 0 15 16"><g fill="none" stroke="#868686" stroke-width="1.500"><rect x="-4" y="-2.400" width="8" height="4.800" rx="2.400" transform="translate(10.2 5.6) rotate(-55)"/><path d="M6.300 7.300 L7.400 8.900" stroke="#fff" stroke-width="1.600"/><rect x="-4" y="-2.400" width="8" height="4.800" rx="2.400" transform="translate(4.9 10.4) rotate(-55)"/><path d="M8.800 8.700 L7.700 7.100" stroke="#fff" stroke-width="1.600" transform="translate(0 0)"/></g></svg><svg style="left:337.0px;top:469px" width="13" height="16" viewBox="0 0 13 16"><path d="M.5 .5 H9 L12.500 4 V15.500 H.5 Z" fill="#fff" stroke="#a3a3a3"/><path d="M1 1 H9 L12 4 V8 H1 Z" fill="#f2f2f2"/><path d="M1 8 H12 V10 H1 Z" fill="#f9f9f9"/><path d="M9 .5 V4 H12.500 Z" fill="#fff" stroke="#a3a3a3" stroke-linejoin="round"/><path d="M2 9.500 H6 M7 9.500 H9 M10 9.500 H11 M2 12.500 H7 M8 12.500 H11" stroke="#1d62d8" stroke-width="1.200"/></svg><div class="abs t" style="left:354.2px;top:467.5px;letter-spacing:0.266px;">tasks/setUpEmail.dita</div>
<svg style="left:319.59999999999997px;top:503.7px" width="15" height="16" viewBox="0 0 15 16"><g fill="none" stroke="#868686" stroke-width="1.500"><rect x="-4" y="-2.400" width="8" height="4.800" rx="2.400" transform="translate(10.2 5.6) rotate(-55)"/><path d="M6.300 7.300 L7.400 8.900" stroke="#fff" stroke-width="1.600"/><rect x="-4" y="-2.400" width="8" height="4.800" rx="2.400" transform="translate(4.9 10.4) rotate(-55)"/><path d="M8.800 8.700 L7.700 7.100" stroke="#fff" stroke-width="1.600" transform="translate(0 0)"/></g></svg><svg style="left:337.0px;top:503px" width="13" height="16" viewBox="0 0 13 16"><path d="M.5 .5 H9 L12.500 4 V15.500 H.5 Z" fill="#fff" stroke="#a3a3a3"/><path d="M1 1 H9 L12 4 V8 H1 Z" fill="#f2f2f2"/><path d="M1 8 H12 V10 H1 Z" fill="#f9f9f9"/><path d="M9 .5 V4 H12.500 Z" fill="#fff" stroke="#a3a3a3" stroke-linejoin="round"/><path d="M2 9.500 H6 M7 9.500 H9 M10 9.500 H11 M2 12.500 H7 M8 12.500 H11" stroke="#1d62d8" stroke-width="1.200"/></svg><div class="abs t" style="left:354.2px;top:501.5px;letter-spacing:0.303px;">tasks/composeSendEmail.dita</div>
<svg style="left:319.59999999999997px;top:538.7px" width="15" height="16" viewBox="0 0 15 16"><g fill="none" stroke="#868686" stroke-width="1.500"><rect x="-4" y="-2.400" width="8" height="4.800" rx="2.400" transform="translate(10.2 5.6) rotate(-55)"/><path d="M6.300 7.300 L7.400 8.900" stroke="#fff" stroke-width="1.600"/><rect x="-4" y="-2.400" width="8" height="4.800" rx="2.400" transform="translate(4.9 10.4) rotate(-55)"/><path d="M8.800 8.700 L7.700 7.100" stroke="#fff" stroke-width="1.600" transform="translate(0 0)"/></g></svg><svg style="left:337.0px;top:538px" width="13" height="16" viewBox="0 0 13 16"><path d="M.5 .5 H9 L12.500 4 V15.500 H.5 Z" fill="#fff" stroke="#a3a3a3"/><path d="M1 1 H9 L12 4 V8 H1 Z" fill="#f2f2f2"/><path d="M1 8 H12 V10 H1 Z" fill="#f9f9f9"/><path d="M9 .5 V4 H12.500 Z" fill="#fff" stroke="#a3a3a3" stroke-linejoin="round"/><path d="M2 9.500 H6 M7 9.500 H9 M10 9.500 H11 M2 12.500 H7 M8 12.500 H11" stroke="#1d62d8" stroke-width="1.200"/></svg><div class="abs t" style="left:354.2px;top:536.5px;letter-spacing:0.227px;">topics/deleteEmails.dita</div>
<div class="abs gbox" style="left:279px;top:572px;width:689px;height:187px"></div>
<svg style="left:282px;top:576.5px" width="10" height="6" viewBox="0 0 10 6"><path d="M.6 .5 H9.4 L5 5.2 Z" fill="#f4f9ff" stroke="#3f8ff0" stroke-width="1" stroke-linejoin="round"/></svg>
<div class="abs" style="left:292px;top:576.0px;width:4.5px;height:17px;background:#4d8df0"></div><div class="abs" style="left:674.2px;top:573.0px;width:12.699999999999932px;height:19.6px;background:#4d8df0"></div><svg style="left:296.2px;top:573.5px" width="386.6" height="19" viewBox="0 0 386.6 19"><path d="M.5 .5 H378.0 L385.9 9.5 L378.0 18.5 H.5 Z" fill="#f1f1f1" stroke="#c6c6c6"/><path d="M.5 18.5 H378.0 L385.9 9.5" fill="none" stroke="#b0b0b0"/></svg><div class="abs tg" style="left:300.3px;top:574.5px;letter-spacing:-0.007px">Topic Reference href=&quot;concepts/Bluetooth.dita&quot; product=&quot;X2000&quot;</div>
<svg style="left:687.8px;top:574.7px" width="15" height="16" viewBox="0 0 15 16"><g fill="none" stroke="#868686" stroke-width="1.500"><rect x="-4" y="-2.400" width="8" height="4.800" rx="2.400" transform="translate(10.2 5.6) rotate(-55)"/><path d="M6.300 7.300 L7.400 8.900" stroke="#fff" stroke-width="1.600"/><rect x="-4" y="-2.400" width="8" height="4.800" rx="2.400" transform="translate(4.9 10.4) rotate(-55)"/><path d="M8.800 8.700 L7.700 7.100" stroke="#fff" stroke-width="1.600" transform="translate(0 0)"/></g></svg><svg style="left:705.3px;top:574px" width="13" height="16" viewBox="0 0 13 16"><path d="M.5 .5 H9 L12.500 4 V15.500 H.5 Z" fill="#fff" stroke="#a3a3a3"/><path d="M1 1 H9 L12 4 V8 H1 Z" fill="#f2f2f2"/><path d="M1 8 H12 V10 H1 Z" fill="#f9f9f9"/><path d="M9 .5 V4 H12.500 Z" fill="#fff" stroke="#a3a3a3" stroke-linejoin="round"/><path d="M2 9.500 H6 M7 9.500 H9 M10 9.500 H11 M2 12.500 H7 M8 12.500 H11" stroke="#1d62d8" stroke-width="1.200"/></svg><div class="abs t" style="left:723px;top:572.5px;letter-spacing:0.188px;">concepts/Bluetooth.dita</div>
<div class="abs" style="left:320px;top:609.0px;width:4.5px;height:17px;background:#7df27d"></div><div class="abs" style="left:635.6px;top:609.0px;width:13.299999999999955px;height:17px;background:#7df27d"></div><svg style="left:324.2px;top:606.5px" width="320.8" height="19" viewBox="0 0 320.8 19"><path d="M.5 .5 H311.4 L320.1 9.5 L311.4 18.5 H.5 Z" fill="#f1f1f1" stroke="#c6c6c6"/><path d="M.5 18.5 H311.4 L320.1 9.5" fill="none" stroke="#b0b0b0"/></svg><div class="abs tg" style="left:328.1px;top:607.5px;letter-spacing:-0.002px">Topic Reference href=&quot;tasks/turnBluetoothOnOff.dita&quot;</div>
<svg style="left:649.8px;top:607.7px" width="15" height="16" viewBox="0 0 15 16"><g fill="none" stroke="#868686" stroke-width="1.500"><rect x="-4" y="-2.400" width="8" height="4.800" rx="2.400" transform="translate(10.2 5.6) rotate(-55)"/><path d="M6.300 7.300 L7.400 8.900" stroke="#fff" stroke-width="1.600"/><rect x="-4" y="-2.400" width="8" height="4.800" rx="2.400" transform="translate(4.9 10.4) rotate(-55)"/><path d="M8.800 8.700 L7.700 7.100" stroke="#fff" stroke-width="1.600" transform="translate(0 0)"/></g></svg><svg style="left:667.3px;top:607px" width="13" height="16" viewBox="0 0 13 16"><path d="M.5 .5 H9 L12.500 4 V15.500 H.5 Z" fill="#fff" stroke="#a3a3a3"/><path d="M1 1 H9 L12 4 V8 H1 Z" fill="#f2f2f2"/><path d="M1 8 H12 V10 H1 Z" fill="#f9f9f9"/><path d="M9 .5 V4 H12.500 Z" fill="#fff" stroke="#a3a3a3" stroke-linejoin="round"/><path d="M2 9.500 H6 M7 9.500 H9 M10 9.500 H11 M2 12.500 H7 M8 12.500 H11" stroke="#1d62d8" stroke-width="1.200"/></svg><div class="abs t" style="left:685px;top:605.5px;letter-spacing:0.252px;">tasks/turnBluetoothOnOff.dita</div>
<div class="abs" style="left:320px;top:642.8px;width:4.5px;height:17px;background:#7df27d"></div><div class="abs" style="left:627.6px;top:642.8px;width:13.299999999999955px;height:17px;background:#7df27d"></div><svg style="left:324.2px;top:640.3px" width="312.7" height="19" viewBox="0 0 312.7 19"><path d="M.5 .5 H303.4 L312.0 9.5 L303.4 18.5 H.5 Z" fill="#f1f1f1" stroke="#c6c6c6"/><path d="M.5 18.5 H303.4 L312.0 9.5" fill="none" stroke="#b0b0b0"/></svg><div class="abs tg" style="left:328.1px;top:641.3px;letter-spacing:-0.009px">Topic Reference href=&quot;tasks/sendFileBluetooth.dita&quot;</div>
<svg style="left:641.5px;top:641.7px" width="15" height="16" viewBox="0 0 15 16"><g fill="none" stroke="#868686" stroke-width="1.500"><rect x="-4" y="-2.400" width="8" height="4.800" rx="2.400" transform="translate(10.2 5.6) rotate(-55)"/><path d="M6.300 7.300 L7.400 8.900" stroke="#fff" stroke-width="1.600"/><rect x="-4" y="-2.400" width="8" height="4.800" rx="2.400" transform="translate(4.9 10.4) rotate(-55)"/><path d="M8.800 8.700 L7.700 7.100" stroke="#fff" stroke-width="1.600" transform="translate(0 0)"/></g></svg><svg style="left:659.1px;top:641px" width="13" height="16" viewBox="0 0 13 16"><path d="M.5 .5 H9 L12.500 4 V15.500 H.5 Z" fill="#fff" stroke="#a3a3a3"/><path d="M1 1 H9 L12 4 V8 H1 Z" fill="#f2f2f2"/><path d="M1 8 H12 V10 H1 Z" fill="#f9f9f9"/><path d="M9 .5 V4 H12.500 Z" fill="#fff" stroke="#a3a3a3" stroke-linejoin="round"/><path d="M2 9.500 H6 M7 9.500 H9 M10 9.500 H11 M2 12.500 H7 M8 12.500 H11" stroke="#1d62d8" stroke-width="1.200"/></svg><div class="abs t" style="left:677.6px;top:639.5px;letter-spacing:0.198px;">tasks/sendFileBluetooth.dita</div>
<div class="abs" style="left:320px;top:675.8px;width:4.5px;height:17px;background:#7df27d"></div><div class="abs" style="left:648.9px;top:675.8px;width:13.0px;height:17px;background:#7df27d"></div><svg style="left:324.2px;top:673.3px" width="334.1" height="19" viewBox="0 0 334.1 19"><path d="M.5 .5 H324.7 L333.4 9.5 L324.7 18.5 H.5 Z" fill="#f1f1f1" stroke="#c6c6c6"/><path d="M.5 18.5 H324.7 L333.4 9.5" fill="none" stroke="#b0b0b0"/></svg><div class="abs tg" style="left:328.1px;top:674.3px;letter-spacing:-0.007px">Topic Reference href=&quot;tasks/receiveFilesBluetooth.dita&quot;</div>
<svg style="left:662.5px;top:674.7px" width="15" height="16" viewBox="0 0 15 16"><g fill="none" stroke="#868686" stroke-width="1.500"><rect x="-4" y="-2.400" width="8" height="4.800" rx="2.400" transform="translate(10.2 5.6) rotate(-55)"/><path d="M6.300 7.300 L7.400 8.900" stroke="#fff" stroke-width="1.600"/><rect x="-4" y="-2.400" width="8" height="4.800" rx="2.400" transform="translate(4.9 10.4) rotate(-55)"/><path d="M8.800 8.700 L7.700 7.100" stroke="#fff" stroke-width="1.600" transform="translate(0 0)"/></g></svg><svg style="left:680px;top:674px" width="13" height="16" viewBox="0 0 13 16"><path d="M.5 .5 H9 L12.500 4 V15.500 H.5 Z" fill="#fff" stroke="#a3a3a3"/><path d="M1 1 H9 L12 4 V8 H1 Z" fill="#f2f2f2"/><path d="M1 8 H12 V10 H1 Z" fill="#f9f9f9"/><path d="M9 .5 V4 H12.500 Z" fill="#fff" stroke="#a3a3a3" stroke-linejoin="round"/><path d="M2 9.500 H6 M7 9.500 H9 M10 9.500 H11 M2 12.500 H7 M8 12.500 H11" stroke="#1d62d8" stroke-width="1.200"/></svg><div class="abs t" style="left:697.5px;top:672.5px;letter-spacing:0.190px;">tasks/receiveFilesBluetooth.dita</div>
<div class="abs" style="left:292px;top:738px;width:140px;height:14px;background:#c9f8a9"></div>
<div class="abs cond" style="left:294.6px;top:736px;letter-spacing:-0.101px">(if product is <span style="color:#1717e0">'X2000'</span>)</div>
<svg style="left:417px;top:738px" width="13" height="12" viewBox="0 0 13 12"><path d="M.8 11 L1.800 7.600 L8.400 1 L11 3.600 L4.400 10.200 Z" fill="#6e6e6e"/><path d="M9.200 .4 L10.200 -.4 L12.200 1.600 L11.400 2.600 Z" fill="#6e6e6e"/><path d="M0 11.500 H7" stroke="#8a8a8a" stroke-width=".8"/></svg>
<div class="abs gbox" style="left:251px;top:776px;width:717px;height:120px"></div>
<svg style="left:253.6px;top:781px" width="10" height="6" viewBox="0 0 10 6"><path d="M.6 .5 H9.4 L5 5.2 Z" fill="#f4f9ff" stroke="#3f8ff0" stroke-width="1" stroke-linejoin="round"/></svg><svg style="left:264.4px;top:779.7px" width="15" height="16" viewBox="0 0 15 16"><g fill="none" stroke="#868686" stroke-width="1.500"><rect x="-4" y="-2.400" width="8" height="4.800" rx="2.400" transform="translate(10.2 5.6) rotate(-55)"/><path d="M6.300 7.300 L7.400 8.900" stroke="#fff" stroke-width="1.600"/><rect x="-4" y="-2.400" width="8" height="4.800" rx="2.400" transform="translate(4.9 10.4) rotate(-55)"/><path d="M8.800 8.700 L7.700 7.100" stroke="#fff" stroke-width="1.600" transform="translate(0 0)"/></g></svg><svg style="left:281.8px;top:779px" width="13" height="16" viewBox="0 0 13 16"><path d="M.5 .5 H9 L12.500 4 V15.500 H.5 Z" fill="#fff" stroke="#a3a3a3"/><path d="M1 1 H9 L12 4 V8 H1 Z" fill="#f2f2f2"/><path d="M1 8 H12 V10 H1 Z" fill="#f9f9f9"/><path d="M9 .5 V4 H12.500 Z" fill="#fff" stroke="#a3a3a3" stroke-linejoin="round"/><path d="M2 9.500 H6 M7 9.500 H9 M10 9.500 H11 M2 12.500 H7 M8 12.500 H11" stroke="#1d62d8" stroke-width="1.200"/></svg><div class="abs t" style="left:299px;top:777.5px;letter-spacing:0.312px;">topics/serviceAndTroubleshooting.dita</div>
<div class="abs" style="left:264px;top:811px;width:703px;height:80px;background:#fffff0;border:1px solid #c2c2c2"></div>
<svg style="left:266.6px;top:816px" width="10" height="6" viewBox="0 0 10 6"><path d="M.6 .5 H9.4 L5 5.2 Z" fill="#f4f9ff" stroke="#3f8ff0" stroke-width="1" stroke-linejoin="round"/></svg>
<div class="abs t" style="left:279.2px;top:821.5px;letter-spacing:-0.274px;">Data</div>
<div class="abs inp" style="left:321px;top:823px;width:133px;height:22px">wh-tile</div>
<div class="abs t" style="left:311.3px;top:845.0px;letter-spacing:-0.274px;">Data</div>
<div class="abs inp" style="left:353px;top:847px;width:133px;height:22px">hide</div>
<div class="abs inp" style="left:490px;top:847px;width:134px;height:22px">yes</div>
</div>

<!-- right strip + panel -->
<div class="abs" style="left:1135px;top:429px;width:56px;height:56px;background:#fcfcfc"></div>
<svg style="left:1150px;top:220px" width="26" height="26" viewBox="0 0 26 26"><path d="M3.400 14.300 H19.600 A8.600 8.600 0 1 0 17.200 20.600" fill="none" stroke="#1f6db5" stroke-width="2"/><path d="M20.600 1 V8 M17.100 4.500 H24.100" stroke="#1f6db5" stroke-width="1.200"/></svg>
<svg style="left:1152px;top:278px" width="22" height="22" viewBox="0 0 22 22"><path d="M3 0.7 H19 Q21.3 0.7 21.3 3 V14 Q21.3 16.3 19 16.3 H17 L12.5 21.2 V16.3 H3 Q0.7 16.3 0.7 14 V3 Q0.7 0.7 3 0.7 Z" fill="#fff" stroke="#777" stroke-width="1.300" stroke-linejoin="round"/><path d="M3.500 5.500 H18.500 M3.500 8.500 H18.500 M3.500 11.500 H12.500" stroke="#1f6db5" stroke-width="1.100"/></svg>
<svg style="left:1151px;top:333px" width="24" height="24" viewBox="0 0 24 24"><path d="M2 2.500 L9.500 1.200 L22.600 14.300 L14.300 22.600 L1.200 9.500 Z" fill="#fff" stroke="#777" stroke-width="1.300" stroke-linejoin="round" transform="rotate(0)"/><circle cx="5.500" cy="5.500" r="1.500" fill="#fff" stroke="#1f6db5" stroke-width="1.100"/><path d="M8.500 10.500 L14 16 M11.500 7.800 L17 13.300" stroke="#1f6db5" stroke-width="1.300"/></svg>
<svg style="left:1151px;top:381px" width="32" height="32" viewBox="0 0 32 32"><path d="M1.600 9.600 H13.400 L17.600 13.800 V30.400 H1.600 Z" fill="#fff" stroke="#777" stroke-width="1.300"/><path d="M13.400 9.600 V13.800 H17.600" fill="#ddd" stroke="#777" stroke-width="1.100"/><path d="M3.800 21.500 L8.200 26.800 L18.500 12.500" fill="none" stroke="#d4351c" stroke-width="2.400"/><circle cx="22.800" cy="8.800" r="8" fill="#2fbf3a"/><path d="M18.800 9 L21.600 12 L26.800 5.800" fill="none" stroke="#fff" stroke-width="1.700"/></svg>
<svg style="left:1151px;top:444px" width="26" height="26" viewBox="0 0 26 26"><circle cx="9.800" cy="9.800" r="8.600" fill="#fff" stroke="#777" stroke-width="1.300"/><path d="M16 16 L23.600 23.600" stroke="#666" stroke-width="2"/><path d="M4.500 6.500 H15 M4.500 9.500 H15 M4.500 12.500 H11 M20.500 6.500 H24 M20.500 9.500 H24" stroke="#1f6db5" stroke-width="1.100"/></svg>
<svg style="left:1157px;top:851px" width="9" height="14" viewBox="0 0 9 14"><path d="M1.500 1.500 L7 7 L1.500 12.500" fill="none" stroke="#7a7a7a" stroke-width="1.600"/></svg>
<div class="abs ptx " style="left:1199.5px;top:225.34px;font-size:17.2px;color:#222;letter-spacing:-0.157px;">Find/Replace</div>
<div class="abs" style="left:1191px;top:261px;width:243px;height:1px;background:#dcdcdc"></div>
<div class="abs pin" style="left:1203px;top:274px;width:219px;height:36px"></div>
<div class="abs ptx " style="left:1209.5px;top:282.36px;font-size:13.4px;color:#333;letter-spacing:-0.007px;">blue</div>
<svg style="left:1363px;top:287px" width="11" height="11" viewBox="0 0 11 11"><path d="M1 1 L10 10 M10 1 L1 10" stroke="#555" stroke-width="1.500"/></svg>
<div class="abs" style="left:1386px;top:284px;width:1px;height:17px;background:#dcdcdc"></div>
<svg style="left:1395px;top:284px" width="18" height="17" viewBox="0 0 18 17"><circle cx="6.800" cy="6.800" r="5" fill="none" stroke="#555" stroke-width="1.800"/><path d="M10.500 10.500 L16.500 16" stroke="#555" stroke-width="2.100"/></svg>
<div class="abs pin" style="left:1203px;top:322px;width:219px;height:36px"></div>
<div class="abs ptx " style="left:1209.5px;top:330.96px;font-size:13.4px;color:#8c8c8c;letter-spacing:0.202px;">Replace with</div>
<div class="abs cb" style="left:1203px;top:370.500px"></div>
<div class="abs ptx " style="left:1224.5px;top:366.85px;font-size:14px;color:#333;letter-spacing:0.221px;">Match case</div>
<div class="abs cb" style="left:1315px;top:370.500px"></div>
<div class="abs ptx " style="left:1335.9px;top:366.85px;font-size:14px;color:#333;letter-spacing:0.071px;">Whole words</div>
<div class="abs pbtn" style="left:1221px;top:404.500px;width:84px;height:33px"></div>
<div class="abs ptx " style="left:1234.3px;top:411.35px;font-size:14px;color:#333;letter-spacing:0.875px;">Replace</div>
<div class="abs pbtn" style="left:1313px;top:404.500px;width:109px;height:33px"></div>
<div class="abs ptx " style="left:1326.7px;top:411.35px;font-size:14px;color:#333;letter-spacing:1.114px;">Replace All</div>
<div class="abs ptx " style="left:1203.3px;top:465.05px;font-size:14.3px;color:#333;letter-spacing:-0.091px;">Result 1 of 4</div>
<div class="abs" style="left:1304px;top:465.500px;width:18px;height:19.500px;background:#e6e6e6"></div>
<svg style="left:1304px;top:468px" width="19" height="12" viewBox="0 0 19 12"><path d="M1 .8 H10.600 L6.900 5.400 V10.600 L4.700 9.600 V5.400 Z" fill="#555" stroke="#555" stroke-width=".8" stroke-linejoin="round"/><path d="M3.400 2.100 H8.200 L5.800 5 Z" fill="#e6e6e6"/><path d="M12.800 5.800 H17.800 L15.300 8.600 Z" fill="#222"/></svg>
<div class="abs pbtn" style="left:1330px;top:458px;width:42px;height:34px"></div>
<svg style="left:1343px;top:470px" width="16" height="11" viewBox="0 0 16 11"><path d="M1.200 9.800 L8 2.600 L14.800 9.800" fill="none" stroke="#222" stroke-width="2.100"/></svg>
<div class="abs pbtn" style="left:1380px;top:458px;width:42px;height:34px"></div>
<svg style="left:1393px;top:470px" width="16" height="11" viewBox="0 0 16 11"><path d="M1.200 1.600 L8 8.800 L14.800 1.600" fill="none" stroke="#222" stroke-width="2.100"/></svg>
<div class="abs" style="left:1203px;top:500px;width:219px;height:61px;background:#cfe2f3"></div>
<div class="abs ptx " style="left:1211.3px;top:510.75px;font-size:14px;color:#6e6e6e;letter-spacing:0.159px;">[Attribute] Topic Reference</div><div class="abs ptx " style="left:1211.3px;top:528.60px;font-size:14px;color:#2a2a2a;letter-spacing:0.167px;"><span style="color:#6e6e6e">href= </span>&quot;concepts/<b>Blue</b>tooth.dita&quot;</div>
<div class="abs ptx " style="left:1211.3px;top:571.75px;font-size:14px;color:#6e6e6e;letter-spacing:0.159px;">[Attribute] Topic Reference</div><div class="abs ptx " style="left:1211.3px;top:589.60px;font-size:14px;color:#2a2a2a;letter-spacing:0.170px;"><span style="color:#6e6e6e">href= </span>&quot;tasks/turn<b>Blue</b>toothOnOf</div><div class="abs ptx " style="left:1211.3px;top:607.45px;font-size:14px;color:#2a2a2a;letter-spacing:0.167px;">f.dita&quot;</div><div class="abs" style="left:1203px;top:639px;width:219px;height:1px;background:#dcdcdc"></div>
<div class="abs ptx " style="left:1211.3px;top:650.65px;font-size:14px;color:#6e6e6e;letter-spacing:0.159px;">[Attribute] Topic Reference</div><div class="abs ptx " style="left:1211.3px;top:668.50px;font-size:14px;color:#2a2a2a;letter-spacing:0.160px;"><span style="color:#6e6e6e">href= </span>&quot;tasks/sendFile<b>Blue</b>tooth.</div><div class="abs ptx " style="left:1211.3px;top:686.35px;font-size:14px;color:#2a2a2a;letter-spacing:0.231px;">dita&quot;</div><div class="abs" style="left:1203px;top:718px;width:219px;height:1px;background:#dcdcdc"></div>
<div class="abs ptx " style="left:1211.3px;top:729.65px;font-size:14px;color:#6e6e6e;letter-spacing:0.159px;">[Attribute] Topic Reference</div><div class="abs ptx " style="left:1211.3px;top:747.50px;font-size:14px;color:#2a2a2a;letter-spacing:0.130px;"><span style="color:#6e6e6e">href= </span>&quot;tasks/receiveFiles<b>Blue</b>to</div><div class="abs ptx " style="left:1211.3px;top:765.35px;font-size:14px;color:#2a2a2a;letter-spacing:0.177px;">oth.dita&quot;</div><div class="abs" style="left:1203px;top:797px;width:219px;height:1px;background:#dcdcdc"></div>
<div class="abs" id="popup"></div>
<svg style="left:1023px;top:503px" width="12" height="12" viewBox="0 0 12 12"><path d="M1.200 6.200 L4.400 9.800 L10.600 1.400" fill="none" stroke="#111" stroke-width="2.100"/></svg>
<div class="abs ptx " style="left:1052.3px;top:499.25px;font-size:14px;color:#222;letter-spacing:0.175px;">In content and attribute values</div>
<div class="abs ptx " style="left:1052.3px;top:531.15px;font-size:14px;color:#222;letter-spacing:0.074px;">Only in content</div>
<div class="abs ptx " style="left:1052.3px;top:563.05px;font-size:14px;color:#222;letter-spacing:0.091px;">Only in attribute values</div>

<!-- left strip, breadcrumb, scrollbar -->
<svg style="left:32px;top:221px" width="24" height="24" viewBox="32 221 24 24">
<rect x="33.500" y="222.5" width="4" height="4" fill="#a6dca6" stroke="#0a7a0a"/><rect x="40" y="224" width="10" height="1" fill="#555"/>
<rect x="33.500" y="234.5" width="4" height="4" fill="#a6dca6" stroke="#0a7a0a"/><rect x="40" y="236" width="10" height="1" fill="#555"/>
<rect x="43" y="229" width="3" height="3" fill="#0a7a0a"/><rect x="44" y="230" width="1" height="1" fill="#bfe8bf"/><rect x="48" y="230" width="7" height="1" fill="#555"/>
<rect x="43" y="241" width="3" height="3" fill="#0a7a0a"/><rect x="44" y="242" width="1" height="1" fill="#bfe8bf"/><rect x="48" y="242" width="7" height="1" fill="#555"/>
</svg>
<svg style="left:39px;top:851px" width="9" height="14" viewBox="0 0 9 14"><path d="M1.500 1.500 L7 7 L1.500 12.500" fill="none" stroke="#7a7a7a" stroke-width="1.600"/></svg>
<svg style="left:1116px;top:205px" width="18" height="657" viewBox="1116 205 18 657"><path d="M1120.700 216.400 H1128.300 L1124.500 212 Z" fill="#505050"/><path d="M1120.700 849.400 H1128.300 L1124.500 853.800 Z" fill="#505050"/></svg>
<div class="abs" style="left:74px;top:864px;width:43px;height:20px;background:#e8e8e8"></div>
<svg style="left:77px;top:866px" width="34" height="14" viewBox="77 866 34 14"><path d="M78.500 867.300 L82.300 870 L78.500 872.700 Z" fill="#bfe4fb" stroke="#333" stroke-width=".8"/><path d="M84.300 871.300 L88.300 874.300 L84.300 877.300 Z" fill="#bfe4fb" stroke="#333" stroke-width=".8"/><path d="M92.300 871.300 L88.300 874.300 L92.300 877.300 Z" fill="#bfe4fb" stroke="#333" stroke-width=".8"/><path d="M101.800 874.600 H108.400 L105.100 869.600 Z" fill="#222"/></svg>
<svg style="left:72px;top:862px" width="1062" height="25" viewBox="72 862 1062 25"><path d="M120 864 H202.5 L207.9 874 L202.5 884 H120 Z" fill="#e8e8e8"/><path d="M205.3 864 H361.6 L367.0 874 L361.6 884 H205.3 L210.70000000000002 874 Z" fill="#e8e8e8"/><path d="M364.4 864 H521.9 L527.3 874 L521.9 884 H364.4 L369.79999999999995 874 Z" fill="#c4d8f4"/><path d="M1119.500 872.800 L1124 868.300 L1128.500 872.800 M1119.500 878.600 L1124 874.100 L1128.500 878.600" fill="none" stroke="#2f7ed8" stroke-width="1.200"/></svg>
<div class="abs ptx" style="left:148.6px;top:864.15px;font-size:14px;color:#333;letter-spacing:-0.111px;">Map</div>
<div class="abs ptx" style="left:234.2px;top:864.15px;font-size:14px;color:#333;letter-spacing:0.049px;">Topic Reference</div>
<div class="abs ptx" style="left:394.7px;top:864.15px;font-size:14px;color:#333;letter-spacing:0.075px;">Topic Reference</div>

</div></div>
</body>
</html>
